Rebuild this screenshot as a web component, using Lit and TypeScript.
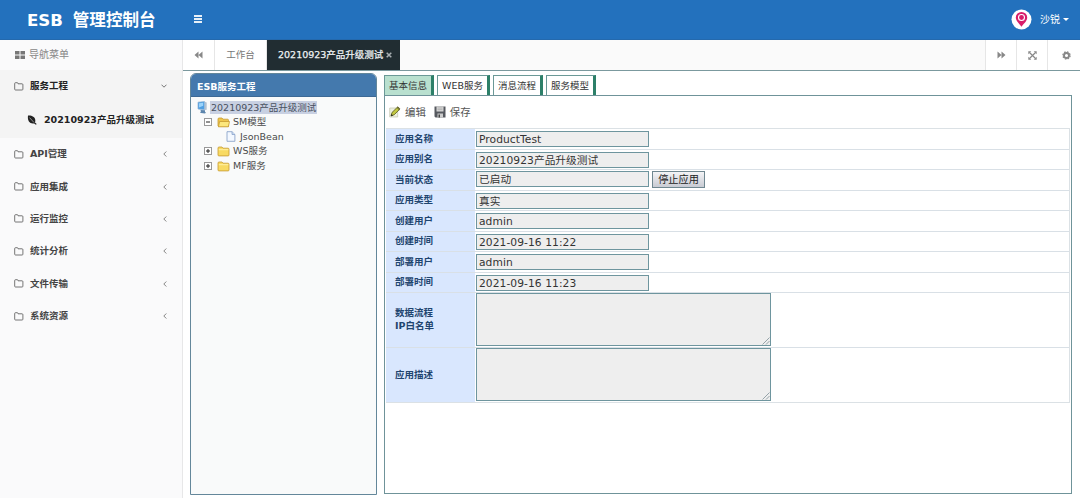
import { LitElement, html, css, svg } from "lit";
import { customElement } from "lit/decorators.js";

const folderOutline = html`<svg class="fo" width="10" height="9" viewBox="0 0 10 9"><path d="M.7 7.2V1.5q0-.8.8-.8h1.7q.8 0 .8.8v.3h4q.9 0 .9.9v4.5q0 .8-.8.8H1.5q-.8 0-.8-.8z" fill="none" stroke="#666" stroke-width=".9"/></svg>`;
const leaf = html`<svg class="leaf" width="10" height="10" viewBox="0 0 10 10"><path d="M1 .6C4.500.2 8 1.800 8.300 5c.1 1.200-.1 2-.3 2.600L9.700 9l-.8.7-1.700-1.300C3.200 9.200.2 6.500 1 .6z" fill="#222"/><path d="M2.500 2.600L7 7.500" stroke="#ddd" stroke-width=".6"/></svg>`;
const grid = html`<svg class="grid" width="10" height="8" viewBox="0 0 10 8"><path d="M0 0h4.500v3.500H0zM5.500 0H10v3.500H5.500zM0 4.500h4.500V8H0zM5.500 4.500H10V8H5.500z" fill="#777"/></svg>`;
const chevLeft = html`<svg width="4" height="6" viewBox="0 0 4 6"><path d="M3.300.5L.8 3l2.500 2.500" fill="none" stroke="#777" stroke-width=".9"/></svg>`;
const chevDown = html`<svg width="6" height="4" viewBox="0 0 6 4"><path d="M.5.7L3 3.200 5.500.7" fill="none" stroke="#666" stroke-width=".9"/></svg>`;
const back = html`<svg width="9" height="8" viewBox="0 0 9 8"><path d="M4.500.5v7L.5 4zM8.500.5v7L4.500 4z" fill="#888"/></svg>`;
const forward = html`<svg width="9" height="8" viewBox="0 0 9 8"><path d="M.5.5v7l4-3.500zM4.500.5v7l4-3.500z" fill="#888"/></svg>`;
const expand = html`<svg width="9" height="9" viewBox="0 0 9 9"><path d="M1.500 1.500l6 6M7.500 1.500l-6 6" stroke="#888" stroke-width="1.200"/><path d="M.3.3h3l-3 3zM8.700.3v3l-3-3zM.3 8.700v-3l3 3zM8.700 8.700h-3l3-3z" fill="#888"/></svg>`;
const gear = html`<svg width="9" height="9" viewBox="0 0 9 9"><circle cx="4.500" cy="4.500" r="2.500" fill="none" stroke="#888" stroke-width="1.900"/><circle cx="4.500" cy="4.500" r="3.600" fill="none" stroke="#888" stroke-width="1.300" stroke-dasharray="1.500 1.327"/></svg>`;
const pin = html`<svg width="21" height="21" viewBox="0 0 21 21"><circle cx="10.500" cy="10.500" r="10" fill="#fff"/><path d="M10.500 17.800C7.500 14 4.800 11.800 4.800 8.600a5.700 5.700 0 0 1 11.400 0c0 3.200-2.700 5.400-5.700 9.200z" fill="#d81e6b"/><circle cx="10.500" cy="8.500" r="3" fill="none" stroke="#fff" stroke-width="1.100"/></svg>`;
const computer = html`<svg class="pc" width="11" height="13" viewBox="0 0 11 13"><path d="M1 1.200L7.500.6v8.200L1 8z" fill="#4f9fe2" stroke="#8bb0d2" stroke-width=".7"/><path d="M2 2.200l4.200-.4v3L2 6.500z" fill="#9bd4fb"/><path d="M7.800.7L9.700 1.500v7.300L7.800 9z" fill="#b3c2d1"/><path d="M3.500 9l4.500.2V11l1 .6-1 .9-4-.4-1.300-1 1.300-.3z" fill="#5d86ad"/></svg>`;
const folder = html`<svg class="folder" width="13" height="12" viewBox="0 0 13 12"><path d="M1 10V3q0-1 1-1h3l1 1.200h5q1 0 1 1V10q0 .9-.9.9H1.900Q1 10.900 1 10z" fill="#f8da63" stroke="#c69b32" stroke-width=".8"/><path d="M1.800 4.700h9.500" stroke="#fff1a5"/></svg>`;
const folderOpen = html`<svg class="folder" width="13" height="12" viewBox="0 0 13 12"><path d="M1 10V3q0-1 1-1h3l1 1.200h4.500q1 0 1 1v6.300H1.500z" fill="#efc64b" stroke="#c69b32" stroke-width=".8"/><path d="M1.400 10.800L2.600 5.500h9.900L11.400 10.800z" fill="#fce77c" stroke="#c69b32" stroke-width=".8"/></svg>`;
const page = html`<svg class="page" width="10" height="11" viewBox="0 0 10 11"><path d="M1 .7h5L8.900 3.500v6.800H1z" fill="#f3f8ff" stroke="#7f9bc4" stroke-width=".8"/><path d="M6 .7v2.800h2.900" fill="#c8d9f0" stroke="#7f9bc4" stroke-width=".7"/></svg>`;
const box = (plus: boolean) => html`<svg class="box" width="8" height="8" viewBox="0 0 8 8"><rect x=".5" y=".5" width="7" height="7" fill="#fff" stroke="#999"/><path d="M2 4h4" stroke="#222"/>${plus ? svg`<path d="M4 2v4" stroke="#222"/>` : ""}</svg>`;
const pencil = html`<svg width="12" height="12" viewBox="0 0 12 12"><path d="M.7 2h8v9h-8z" fill="#edf0df" stroke="#c1c4ad" stroke-width=".7"/><path d="M2 10l1-3.500L8.800.8l2.200 2.100-5.700 5.800z" fill="#c3c940" stroke="#55551e" stroke-width=".8"/><path d="M8.100 1.500l2.200 2.200" stroke="#443" stroke-width="1"/><path d="M2 10l.6-2 1.400 1.400z" fill="#222"/></svg>`;
const disk = html`<svg width="12" height="12" viewBox="0 0 12 12"><path d="M.5.5h11v11H1.500l-1-1z" fill="#56595f"/><path d="M2.500.5h7v5h-7z" fill="#d8d8d8"/><path d="M3.500 2h5M3.500 3.700h5" stroke="#999" stroke-width=".6"/><path d="M3.500 7.500h5.500v4H3.500z" fill="#ccc"/><path d="M4.500 8.500h1.500v3H4.500z" fill="#444"/></svg>`;

const menu = ["API管理", "应用集成", "运行监控", "统计分析", "文件传输", "系统资源"];
const fields: [string, string][] = [
  ["应用名称", "ProductTest"],
  ["应用别名", "20210923产品升级测试"],
  ["当前状态", "已启动"],
  ["应用类型", "真实"],
  ["创建用户", "admin"],
  ["创建时间", "2021-09-16 11:22"],
  ["部署用户", "admin"],
  ["部署时间", "2021-09-16 11:23"],
];

@customElement("app-root")
export class AppRoot extends LitElement {
  static styles = css`
    :host { display: block; width: 1080px; height: 498px; overflow: hidden; background: #fff; font: 9.5px/14px "DejaVu Sans", "Noto Sans CJK SC", sans-serif; color: #333; }
    * { box-sizing: border-box; }
    svg { display: block; flex: none; }
    .header { height: 40px; background: #2371bd; border-bottom: 1px solid #2469ad; display: flex; align-items: center; color: #fff; }
    .brand { width: 182px; padding: 2px 0 0 27px; font-size: 16.6px; line-height: 24px; font-weight: 700; word-spacing: 4px; white-space: nowrap; }
    .burger { width: 8px; height: 8px; margin: -2px 0 0 12px; border-top: 2px solid #e7f0f8; border-bottom: 2px solid #e7f0f8; display: flex; align-items: center; }
    .burger::before { content: ""; width: 8px; height: 2px; background: #e7f0f8; }
    .user { margin-left: auto; display: flex; align-items: center; padding-right: 11px; font-size: 10px; }
    .user-name { margin-left: 8px; }
    .caret { border: 3px solid transparent; border-top-color: #fff; border-bottom: 0; margin-left: 3px; }
    .body { height: 458px; display: flex; }
    .side { width: 183px; border-right: 1px solid #e7e7e8; background: #fafafb; font-weight: 700; }
    .nav-title { height: 30px; display: flex; align-items: center; padding-left: 15px; font-weight: 400; font-size: 10px; color: #888; }
    .grid { margin-right: 4px; }
    .open { height: 68px; background: #f4f4f4; }
    .item { height: 32.4px; display: flex; align-items: center; padding: 0 15px 0 14px; color: #444; }
    .item span { flex: 1; }
    .open .item { height: 32px; color: #222; }
    .fo { margin-right: 6px; }
    .sub { height: 35px; display: flex; align-items: center; padding-left: 27px; color: #222; }
    .leaf { margin-right: 7px; }
    .main { flex: 1; min-width: 0; }
    .tabbar { height: 31px; display: flex; background: #fafafa; border-bottom: 1px solid #7b999e; color: #777; }
    .cell { display: flex; align-items: center; justify-content: center; border-right: 1px solid #e6e6e6; background: #fff; }
    .back { width: 32px; }
    .work { width: 52px; }
    .current { width: 133px; background: #212d32; color: #eef2f3; display: flex; align-items: center; padding-left: 11px; white-space: nowrap; -webkit-text-stroke: .25px #eef2f3; }
    .close { margin-left: 3px; }
    .tools { margin-left: auto; display: flex; border-left: 1px solid #e6e6e6; }
    .tool { width: 31px; }
    .tool:last-child { width: 32px; border-right: 0; padding-left: 4px; }
    .content { display: flex; height: 427px; padding: 2px 8px 3px 7px; }
    .tree-panel { width: 187px; border: 1px solid #64879a; border-radius: 6px 6px 0 0; background: #f9fafa; overflow: hidden; }
    .tree-head { height: 23px; background: #4479ad; border-bottom: 1px solid #3d6995; color: #fff; font-weight: 700; line-height: 26px; padding-left: 6px; }
    .tree { padding-top: 3px; color: #4a4a4a; }
    .node { height: 14.6px; display: flex; align-items: center; white-space: nowrap; }
    .node.root { padding-left: 6px; height: 15px; }
    .root-label { background: #c8d0e2; height: 13px; line-height: 13px; padding: 0 1px; margin-left: 2px; color: #48505f; }
    .node.child { padding-left: 13px; }
    .box { margin-right: 5px; }
    .folder { margin-right: 3px; }
    .node.leafnode { padding-left: 35px; }
    .page { margin-right: 4px; }
    .right { margin-left: 7px; flex: 1; min-width: 0; display: flex; flex-direction: column; padding-top: 2px; }
    .tabs { display: flex; gap: 3px; height: 20px; }
    .tab { height: 20px; border: 1px solid #6b9997; border-right: 3px solid #2d8069; border-bottom: 0; background: #fff; line-height: 20px; text-align: center; white-space: nowrap; }
    .tab.w0 { width: 50px; background: #b9e0cf; }
    .tab.w1 { width: 53px; }
    .tab.w2 { width: 50px; }
    .tab.w3 { width: 50px; }
    .pane { flex: 1; border: 1px solid #6f9399; background: #fff; margin-bottom: 1px; padding: 0 1px; }
    .toolbar { height: 32px; display: flex; align-items: center; padding-left: 3px; font-size: 10.4px; color: #555; }
    .toolbar span { margin: 0 8px 0 4px; }
    .form { border: 1px solid #dbe1e5; border-left: 0; }
    .row { height: 20.5px; display: flex; border-bottom: 1px solid #d9e0e6; }
    .row:last-child { border-bottom: 0; }
    .label { width: 89px; background: #d9e7fe; color: #1f456f; padding-left: 9px; font-weight: 700; display: flex; align-items: center; line-height: 12.500px; }
    .value { display: flex; padding: 2px 0 0 1px; align-items: flex-start; }
    .value.status { padding-top: 1px; }
    .field { width: 173px; height: 16px; border: 1px solid #6e959e; background: #eee; font-size: 10.7px; line-height: 15px; letter-spacing: .06px; padding-left: 2px; white-space: nowrap; color: #333; }
    .stop { margin-left: 3px; padding: 0; width: 53px; height: 17px; border: 1px solid #6f8790; background: linear-gradient(#f4f4f6, #c8cbd3); font-family: inherit; font-size: 10.2px; line-height: 14px; color: #222; text-align: center; white-space: nowrap; }
    .row.tall { height: 54.500px; }
    .tall .value { padding-top: 0; }
    .area { width: 295px; height: 53px; border: 1px solid #6e959e; background: #eee; display: flex; align-items: flex-end; justify-content: flex-end; }
  `;

  private area() {
    return html`<div class="area"><svg width="8" height="8" viewBox="0 0 8 8"><path d="M.5 7.500l7-7M4 7.500L7.500 4" stroke="#8a9aa0" stroke-width=".9"/></svg></div>`;
  }

  render() {
    return html`
      <div class="header">
        <div class="brand">ESB 管理控制台</div>
        <div class="burger"></div>
        <div class="user">${pin}<span class="user-name">沙锐</span><i class="caret"></i></div>
      </div>
      <div class="body">
        <div class="side">
          <div class="nav-title">${grid}导航菜单</div>
          <div class="open">
            <div class="item">${folderOutline}<span>服务工程</span>${chevDown}</div>
            <div class="sub">${leaf}20210923产品升级测试</div>
          </div>
          ${menu.map((m) => html`<div class="item">${folderOutline}<span>${m}</span>${chevLeft}</div>`)}
        </div>
        <div class="main">
          <div class="tabbar">
            <div class="cell back">${back}</div>
            <div class="cell work">工作台</div>
            <div class="current">20210923产品升级测试<svg class="close" width="6" height="6" viewBox="0 0 6 6"><path d="M.7.7l4.600 4.600M5.300.7L.7 5.300" stroke="#a9b0b3" stroke-width="1.500"/></svg></div>
            <div class="tools">
              <div class="cell tool">${forward}</div>
              <div class="cell tool">${expand}</div>
              <div class="cell tool">${gear}</div>
            </div>
          </div>
          <div class="content">
            <div class="tree-panel">
              <div class="tree-head">ESB服务工程</div>
              <div class="tree">
                <div class="node root">${computer}<span class="root-label">20210923产品升级测试</span></div>
                <div class="node child">${box(false)}${folderOpen}SM模型</div>
                <div class="node leafnode">${page}JsonBean</div>
                <div class="node child">${box(true)}${folder}WS服务</div>
                <div class="node child">${box(true)}${folder}MF服务</div>
              </div>
            </div>
            <div class="right">
              <div class="tabs">
                ${["基本信息", "WEB服务", "消息流程", "服务模型"].map((t, i) => html`<div class="tab w${i}">${t}</div>`)}
              </div>
              <div class="pane">
                <div class="toolbar">${pencil}<span>编辑</span>${disk}<span>保存</span></div>
                <div class="form">
                  ${fields.map(
                    ([l, v]) => html`<div class="row">
                      <div class="label">${l}</div>
                      <div class="value ${l === "当前状态" ? "status" : ""}"><div class="field">${v}</div>${l === "当前状态" ? html`<button class="stop">停止应用</button>` : ""}</div>
                    </div>`
                  )}
                  <div class="row tall"><div class="label">数据流程<br />IP白名单</div><div class="value">${this.area()}</div></div>
                  <div class="row tall"><div class="label">应用描述</div><div class="value">${this.area()}</div></div>
                </div>
              </div>
            </div>
          </div>
        </div>
      </div>
    `;
  }
}
